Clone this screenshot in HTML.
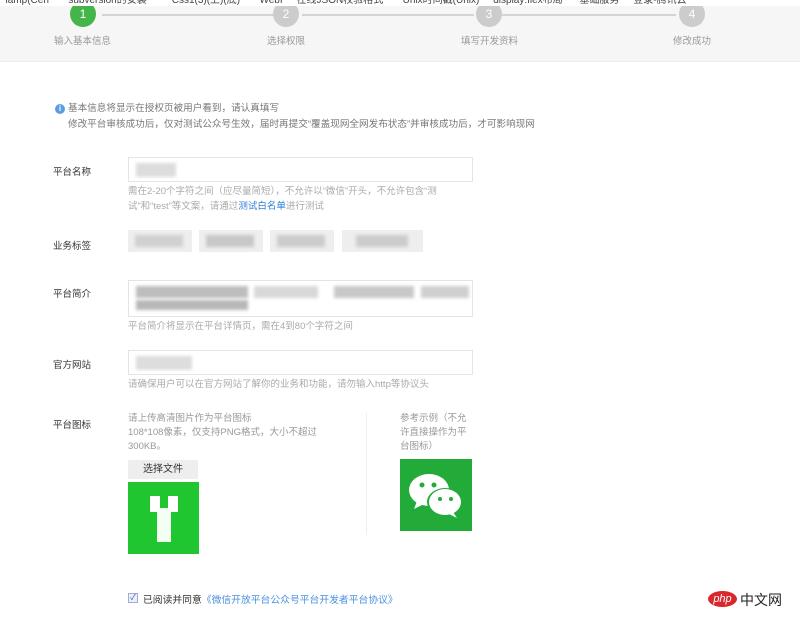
<!DOCTYPE html>
<html><head><meta charset="utf-8"><style>
*{margin:0;padding:0;box-sizing:border-box}
body{width:800px;height:620px;overflow:hidden;background:#fff;font-family:"Liberation Sans","Noto Sans CJK SC",sans-serif;font-size:10px;color:#333;position:relative}
.abs{position:absolute}
.bm{top:0;left:0;width:800px;height:6px;background:#fff;overflow:hidden;font-size:10px;color:#444;white-space:nowrap;line-height:1px}
.head{top:6px;left:0;width:800px;height:56px;background:#f6f6f6;border-bottom:1px solid #eee}
.c{width:26px;height:26px;border-radius:50%;background:#ccc;color:#fff;text-align:center;line-height:26px;font-size:12px}
.ln{height:2px;background:#d4d4d4}
.sl{color:#999;font-size:9.5px}
.lab{font-size:9.5px;color:#333}
.inp{border:1px solid #e4e4e4;background:#fff}
.hint{color:#aaa;font-size:9.5px;line-height:15px}
.blur{background:#ddd;filter:blur(1.5px)}
.tag{background:#eee;height:22px}
</style></head><body>
<div class="abs head"></div>
<div class="abs ln" style="left:102px;top:14px;width:172px"></div>
<div class="abs ln" style="left:302px;top:14px;width:172px"></div>
<div class="abs ln" style="left:502px;top:14px;width:174px"></div>
<div class="abs c" style="left:70px;top:1px;background:#44b549">1</div>
<div class="abs c" style="left:273px;top:1px">2</div>
<div class="abs c" style="left:476px;top:1px">3</div>
<div class="abs c" style="left:679px;top:1px">4</div>
<div class="abs bm">&nbsp;&nbsp;lamp(Cen &nbsp;&nbsp;&nbsp;&nbsp;&nbsp; subversion的安装 &nbsp;&nbsp;&nbsp;&nbsp;&nbsp;&nbsp;&nbsp; Css1(3)(上)(底) &nbsp;&nbsp;&nbsp;&nbsp;&nbsp; WebI &nbsp;&nbsp;&nbsp; 在线JSON校验格式 &nbsp;&nbsp;&nbsp;&nbsp;&nbsp; Unix时间戳(Unix) &nbsp;&nbsp;&nbsp; display:flex布局 &nbsp;&nbsp;&nbsp;&nbsp; 基础服务 &nbsp;&nbsp;&nbsp; 登录-腾讯云</div>
<div class="abs sl" style="left:54px;top:33px">输入基本信息</div>
<div class="abs sl" style="left:267px;top:33px">选择权限</div>
<div class="abs sl" style="left:461px;top:33px">填写开发资料</div>
<div class="abs sl" style="left:673px;top:33px">修改成功</div>

<div class="abs" style="left:55px;top:104px;width:10px;height:10px;border-radius:50%;background:#5a9ee0;color:#fff;font-size:8px;text-align:center;line-height:10px;font-weight:bold">i</div>
<div class="abs" style="left:68px;top:101px;color:#777;line-height:16px;font-size:9.6px">基本信息将显示在授权页被用户看到，请认真填写<br>修改平台审核成功后，仅对测试公众号生效，届时再提交“覆盖现网全网发布状态”并审核成功后，才可影响现网</div>

<div class="abs lab" style="left:53px;top:164px">平台名称</div>
<div class="abs inp" style="left:128px;top:157px;width:345px;height:25px"><div class="blur abs" style="left:7px;top:5px;width:40px;height:14px"></div></div>
<div class="abs hint" style="left:128px;top:184px;width:340px">需在2-20个字符之间（应尽量简短），不允许以“微信”开头，不允许包含“测试”和“test”等文案，请通过<span style="color:#2f7fd8">测试白名单</span>进行测试</div>

<div class="abs lab" style="left:53px;top:238px">业务标签</div>
<div class="abs tag" style="left:128px;top:230px;width:64px"><div class="blur abs" style="left:7px;top:5px;width:48px;height:12px;background:#d0d0d0"></div></div>
<div class="abs tag" style="left:199px;top:230px;width:64px"><div class="blur abs" style="left:7px;top:5px;width:48px;height:12px;background:#c8c8c8"></div></div>
<div class="abs tag" style="left:270px;top:230px;width:64px"><div class="blur abs" style="left:7px;top:5px;width:48px;height:12px;background:#cccccc"></div></div>
<div class="abs tag" style="left:342px;top:230px;width:81px"><div class="blur abs" style="left:14px;top:5px;width:52px;height:12px;background:#cccccc"></div></div>

<div class="abs lab" style="left:53px;top:286px">平台简介</div>
<div class="abs inp" style="left:128px;top:280px;width:345px;height:37px">
<div class="blur abs" style="left:7px;top:5px;width:112px;height:12px;background:#bdbdbd"></div>
<div class="blur abs" style="left:125px;top:5px;width:64px;height:12px;background:#d8d8d8"></div>
<div class="blur abs" style="left:205px;top:5px;width:80px;height:12px;background:#c8c8c8"></div>
<div class="blur abs" style="left:292px;top:5px;width:48px;height:12px;background:#cfcfcf"></div>
<div class="blur abs" style="left:7px;top:19px;width:112px;height:10px;background:#b8b8b8"></div>
</div>
<div class="abs hint" style="left:128px;top:319px">平台简介将显示在平台详情页，需在4到80个字符之间</div>

<div class="abs lab" style="left:53px;top:357px">官方网站</div>
<div class="abs inp" style="left:128px;top:350px;width:345px;height:25px"><div class="blur abs" style="left:7px;top:5px;width:56px;height:14px"></div></div>
<div class="abs hint" style="left:128px;top:377px">请确保用户可以在官方网站了解你的业务和功能，请勿输入http等协议头</div>

<div class="abs lab" style="left:53px;top:417px">平台图标</div>
<div class="abs hint" style="left:128px;top:412px;width:200px;color:#999;line-height:14px">请上传高清图片作为平台图标<br>108*108像素，仅支持PNG格式，大小不超过300KB。</div>
<div class="abs" style="left:128px;top:460px;width:70px;height:19px;background:#eee;text-align:center;line-height:19px;color:#333">选择文件</div>
<div class="abs" style="left:128px;top:482px;width:71px;height:72px;background:#1fc62f">
<div class="abs" style="left:22px;top:14px;width:10px;height:16px;background:#fff"></div>
<div class="abs" style="left:40px;top:14px;width:10px;height:16px;background:#fff"></div>
<div class="abs" style="left:29px;top:26px;width:14px;height:34px;background:#f2fff2"></div>
</div>
<div class="abs" style="left:366px;top:413px;width:1px;height:122px;background:#eee"></div>
<div class="abs hint" style="left:400px;top:412px;width:72px;color:#999;line-height:14px">参考示例（不允许直接操作为平台图标）</div>
<div class="abs" style="left:400px;top:459px;width:72px;height:72px;background:#22ab38">
<svg width="72" height="72" viewBox="0 0 72 72"><ellipse cx="29" cy="31" rx="20" ry="16" fill="#fff"/><path d="M17 42 L14 50 L24 45Z" fill="#fff"/><ellipse cx="45" cy="43" rx="18" ry="14" fill="#22ab38"/><ellipse cx="45" cy="43" rx="16" ry="13" fill="#fff"/><path d="M53 53 L57 59 L49 55Z" fill="#fff"/><circle cx="22" cy="26" r="2.5" fill="#22ab38"/><circle cx="34" cy="26" r="2.5" fill="#22ab38"/><circle cx="40" cy="40" r="2" fill="#22ab38"/><circle cx="51" cy="40" r="2" fill="#22ab38"/></svg></div>

<div class="abs" style="left:128px;top:593px;width:10px;height:10px;border:1px solid #aac;background:#e8f0fb;font-size:8px;line-height:8px;text-align:center;color:#3061b0">✓</div>
<div class="abs" style="left:143px;top:592px;color:#333;font-size:9.8px">已阅读并同意<span style="color:#4a90e2">《微信开放平台公众号平台开发者平台协议》</span></div>

<div class="abs" style="left:708px;top:591px;width:29px;height:16px;border-radius:50%;background:#d9272e;color:#fff;font-style:italic;font-size:11px;text-align:center;line-height:16px">php</div>
<div class="abs" style="left:740px;top:590px;font-size:14px;color:#222">中文网</div>
</body></html>
